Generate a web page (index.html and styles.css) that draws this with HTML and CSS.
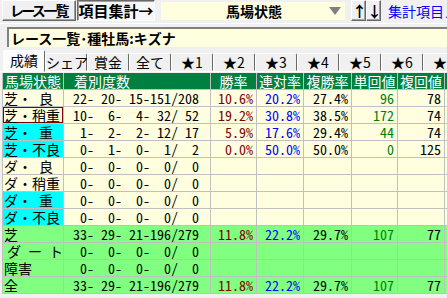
FILE: index.html
```html
<!DOCTYPE html>
<html lang="ja">
<head>
    <meta charset="UTF-8">
    <title>集計</title>
    <link rel="stylesheet" href="styles.css">
</head>
<body>

    <div class="toolbar">
        <button class="btn list">レース一覧</button>
        <button class="btn pressed">項目集計→</button>
        <div class="select">
            <span class="select-text">馬場状態</span>
            <span class="select-arrow"></span>
        </div>
        <button class="btn sort">↑</button>
        <button class="btn sort">↓</button>
        <a class="menu-link">集計項目メニュー</a>
    </div>

    <div class="title">レース一覧･種牡馬:キズナ</div>

    <div class="tabs">
        <div class="tab active">成績</div>
        <div class="tab">シェア</div>
        <div class="tab">賞金</div>
        <div class="tab">全て</div>
        <div class="tab">★1</div>
        <div class="tab">★2</div>
        <div class="tab">★3</div>
        <div class="tab">★4</div>
        <div class="tab">★5</div>
        <div class="tab">★6</div>
        <div class="tab">★7</div>
    </div>

    <table class="grid">
        <colgroup>
            <col class="c-label">
            <col class="c-count">
            <col class="c-rate">
            <col class="c-rate2">
            <col class="c-rate3">
            <col class="c-rate">
            <col class="c-rate2">
            <col class="c-extra">
        </colgroup>
        <thead>
            <tr>
                <th>馬場状態</th>
                <th class="h-count">着別度数</th>
                <th>勝率</th>
                <th>連対率</th>
                <th>複勝率</th>
                <th>単回値</th>
                <th>複回値</th>
                <th></th>
            </tr>
        </thead>
        <tbody>
            <tr>
                <td class="label">芝・ 良</td>
                <td class="count">22- 20- 15-151/208</td>
                <td class="win">10.6%</td>
                <td class="rentai">20.2%</td>
                <td class="num">27.4%</td>
                <td class="tan">96</td>
                <td class="num">78</td>
                <td></td>
            </tr>
            <tr>
                <td class="label selected">芝・稍重</td>
                <td class="count">10-  6-  4- 32/ 52</td>
                <td class="win">19.2%</td>
                <td class="rentai">30.8%</td>
                <td class="num">38.5%</td>
                <td class="tan">172</td>
                <td class="num">74</td>
                <td></td>
            </tr>
            <tr>
                <td class="label cyan">芝・ 重</td>
                <td class="count"> 1-  2-  2- 12/ 17</td>
                <td class="win">5.9%</td>
                <td class="rentai">17.6%</td>
                <td class="num">29.4%</td>
                <td class="tan">44</td>
                <td class="num">74</td>
                <td></td>
            </tr>
            <tr>
                <td class="label cyan">芝・不良</td>
                <td class="count"> 0-  1-  0-  1/  2</td>
                <td class="win">0.0%</td>
                <td class="rentai">50.0%</td>
                <td class="num">50.0%</td>
                <td class="tan">0</td>
                <td class="num">125</td>
                <td></td>
            </tr>
            <tr>
                <td class="label">ダ・ 良</td>
                <td class="count"> 0-  0-  0-  0/  0</td>
                <td></td><td></td><td></td><td></td><td></td><td></td>
            </tr>
            <tr>
                <td class="label">ダ・稍重</td>
                <td class="count"> 0-  0-  0-  0/  0</td>
                <td></td><td></td><td></td><td></td><td></td><td></td>
            </tr>
            <tr>
                <td class="label cyan">ダ・ 重</td>
                <td class="count"> 0-  0-  0-  0/  0</td>
                <td></td><td></td><td></td><td></td><td></td><td></td>
            </tr>
            <tr>
                <td class="label cyan">ダ・不良</td>
                <td class="count"> 0-  0-  0-  0/  0</td>
                <td></td><td></td><td></td><td></td><td></td><td></td>
            </tr>
            <tr class="total">
                <td class="label">芝</td>
                <td class="count">33- 29- 21-196/279</td>
                <td class="win">11.8%</td>
                <td class="rentai">22.2%</td>
                <td class="num">29.7%</td>
                <td class="tan">107</td>
                <td class="num">77</td>
                <td></td>
            </tr>
            <tr class="total">
                <td class="label dirt">ダ ー ト</td>
                <td class="count"> 0-  0-  0-  0/  0</td>
                <td></td><td></td><td></td><td></td><td></td><td></td>
            </tr>
            <tr class="total">
                <td class="label">障害</td>
                <td class="count"> 0-  0-  0-  0/  0</td>
                <td></td><td></td><td></td><td></td><td></td><td></td>
            </tr>
            <tr class="total">
                <td class="label">全</td>
                <td class="count">33- 29- 21-196/279</td>
                <td class="win">11.8%</td>
                <td class="rentai">22.2%</td>
                <td class="num">29.7%</td>
                <td class="tan">107</td>
                <td class="num">77</td>
                <td></td>
            </tr>
        </tbody>
    </table>

</body>
</html>
```

FILE: styles.css
```css
* {
box-sizing: border-box;
}

body {
margin: 0;
width: 447px;
height: 298px;
overflow: hidden;
background: #f0f0f0;
color: #000;
font: 14px/16px "Noto Sans CJK JP", sans-serif;
}

/* top toolbar */

.toolbar {
display: flex;
align-items: center;
height: 24px;
padding: 0 0 2px 2px;
border-bottom: 1px solid #fff;
white-space: nowrap;
overflow: hidden;
}

.toolbar > * {
flex: none;
}

.btn {
height: 21px;
margin: 0;
padding: 0;
font: bold 15px/17px "Noto Sans CJK JP", sans-serif;
font-feature-settings: "palt";
color: #000;
background: #f0f0f0;
border: 1px solid;
border-color: #fff #696969 #696969 #fff;
box-shadow: inset -1px -1px #a0a0a0;
}

.btn.list {
width: 74px;
font-size: 14px;
letter-spacing: -2px;
}

.btn.pressed {
width: 78px;
margin-left: 1px;
border-color: #696969 #fff #fff #696969;
box-shadow: inset 1px 1px #a0a0a0;
background: #f7f7f7;
}

.btn.sort {
width: 15px;
font-size: 15px;
}

.select {
display: flex;
align-items: center;
width: 186px;
height: 20px;
margin: 0 5px;
background: #ffffe0;
border: 1px solid #f0f0f0;
}

.select-text {
flex: 1;
padding-left: 65px;
font-weight: bold;
}

.select-arrow {
width: 0;
height: 0;
margin-right: 4px;
border-left: 6px solid transparent;
border-right: 6px solid transparent;
border-top: 8px solid #808080;
}

.menu-link {
margin-left: 7px;
color: #0000ff;
}

/* title line */

.title {
margin: 3px 0 0 7px;
height: 20px;
padding: 1px 0 0 2px;
background: #ffffe0;
border-top: 2px solid #808080;
border-left: 2px solid #808080;
font-weight: bold;
white-space: nowrap;
}

/* tabs */

.tabs {
display: flex;
align-items: flex-end;
height: 25px;
padding-left: 3px;
border-bottom: 1px solid #fff;
white-space: nowrap;
}

.tab {
flex: none;
width: 42px;
height: 18px;
line-height: 16px;
text-align: center;
background: #f0f0f0;
border: 1px solid;
border-color: #fff #696969 #f0f0f0 #fff;
border-radius: 2px 2px 0 0;
}

.tab.active {
height: 22px;
line-height: 19px;
margin-bottom: -1px;
background: #fcfcfc;
border-bottom-color: #fcfcfc;
}

/* grid */

.grid {
margin: 1px 0 0 2px;
border-collapse: separate;
border-spacing: 0;
table-layout: fixed;
width: 508px;
border-left: 1px solid #c0c0c0;
font-family: "Noto Sans Mono CJK JP", "Noto Sans CJK JP", monospace;
}

.c-label { width: 61px; }
.c-count { width: 147px; }
.c-rate { width: 46px; }
.c-rate2 { width: 47px; }
.c-rate3 { width: 48px; }
.c-extra { width: 66px; }

.grid th,
.grid td {
height: 17px;
padding: 0 3px 0 2px;
border-right: 1px solid #c0c0c0;
border-bottom: 1px solid #c0c0c0;
white-space: pre;
overflow: hidden;
font-size: 14px;
line-height: 16px;
}

.grid th {
padding: 0;
background: #008040;
color: #fff;
font-weight: normal;
text-align: center;
font-family: "Noto Sans CJK JP", sans-serif;
}

.grid th.h-count {
text-align: left;
padding-left: 10px;
}

.grid td {
background: #ffffe0;
text-align: right;
}

.grid td.label {
text-align: left;
padding: 0 0 0 1px;
}

.grid td.label.dirt {
padding-left: 4px;
}

.grid td.count {
padding-right: 11px;
}

.grid td.cyan {
background: #00ffff;
}

.grid td.selected {
box-shadow: inset 0 0 0 1px #800000;
}

.grid tr.total td {
background: #80ff80;
}

.win { color: #800000; }
.rentai { color: #0000ff; }
.tan { color: #008000; }
```
